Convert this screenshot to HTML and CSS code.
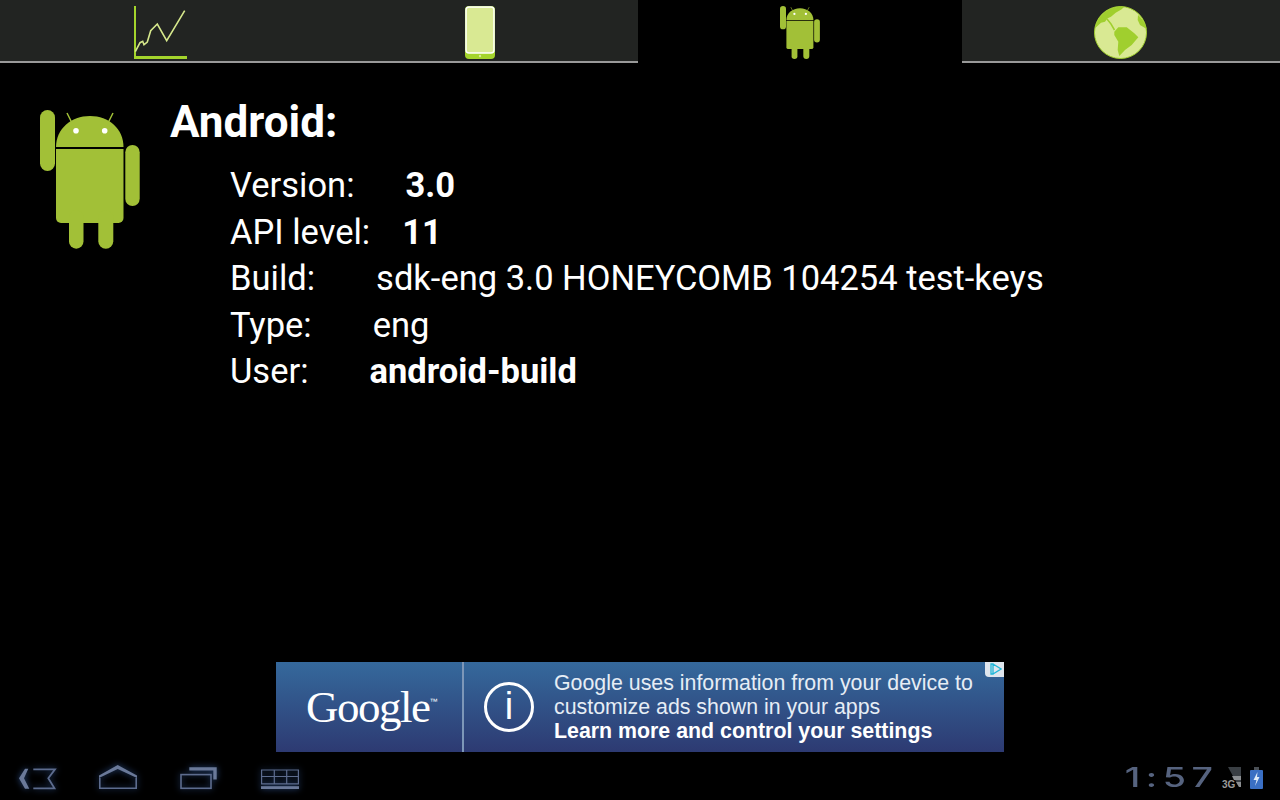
FILE: index.html
```html
<!DOCTYPE html>
<html lang="en">
<head>
    <meta charset="UTF-8">
    <meta name="viewport" content="width=device-width, initial-scale=1.0">
    <title>System Info</title>
    <link rel="stylesheet" href="styles.css">
</head>
<body>
    <svg class="defs" width="0" height="0">
        <symbol id="droid" viewBox="0 0 100 139" preserveAspectRatio="none">
            <rect x="0" y="0" width="15" height="61" rx="7.5"/>
            <path d="M16 37C16 19 31 6 50 6S83.500 19 83.500 37Z"/>
            <path d="M16 39H83.500V108a5 5 0 0 1-5 5H21a5 5 0 0 1-5-5Z"/>
            <rect x="85.300" y="35" width="14.400" height="61" rx="7.200"/>
            <rect x="29" y="100" width="14.500" height="38.700" rx="7.200"/>
            <rect x="58.300" y="100" width="15" height="38.700" rx="7.500"/>
            <path d="M27 3L31.500 12M73 3L68.500 12" stroke="#a2c037" stroke-width="1.500" fill="none"/>
            <circle cx="36" cy="20.700" r="2.800" fill="#fff"/>
            <circle cx="64.700" cy="20.700" r="2.800" fill="#fff"/>
        </symbol>
    </svg>

    <div class="tabs">
        <div class="tab tab-nudge">
            <svg width="53" height="53" viewBox="0 0 53 53">
                <path d="M0 0H2V50H53V53H0Z" fill="#a4d42c"/>
                <polyline points="1.300,45.700 6,36.700 8.700,35.300 10,38.700 13.300,36 16.700,24.700 23.300,18 32.700,34.700 50.700,4.700" fill="none" stroke="#d6e88c" stroke-width="1.600"/>
            </svg>
        </div>
        <div class="tab tab-nudge">
            <svg width="30" height="53" viewBox="0 0 30 53">
                <rect width="30" height="53" rx="4" fill="#a4d42c"/>
                <rect x="1" y="1" width="28" height="46" rx="3" fill="#d9e993" stroke="#fff" stroke-width="1.500"/>
                <circle cx="15" cy="50" r="1.200" fill="#d9e993"/>
            </svg>
        </div>
        <div class="tab tab-active">
            <svg class="droid-small" width="40" height="53"><use href="#droid"/></svg>
        </div>
        <div class="tab tab-globe">
            <svg width="53" height="53" viewBox="0 0 53 53">
                <circle cx="26.500" cy="26.500" r="26" fill="#d9e993" stroke="#a0cf2e" stroke-width="1"/>
                <path d="M20.300 25.700L24.300 21.300H32.700L40.300 27.300L44.300 31.300L37.700 39L31 44L25.300 50L23.700 44L24.300 35.700L20.300 29Z" fill="#a0cf2e"/>
                <path d="M1 22.300A26 26 0 0 1 30 1L27.700 3.300L21.700 6.700L17 10.700L13.700 12.300L11 15.700L7 16.700Z" fill="#a0cf2e"/>
                <path d="M13 13L17 18L20.500 24" fill="none" stroke="#a0cf2e" stroke-width="1.500"/>
                <path d="M44 9A26 26 0 0 1 52.700 23L46 19L43.700 14Z" fill="#a0cf2e"/>
            </svg>
        </div>
    </div>

    <div class="content">
        <svg class="droid-large" width="100" height="139"><use href="#droid"/></svg>
        <div class="info">
            <h1>Android:</h1>
            <div class="row"><span>Version:</span><b class="val-version">3.0</b></div>
            <div class="row"><span>API level:</span><b class="val-api">11</b></div>
            <div class="row"><span>Build:</span><span class="val">sdk-eng 3.0 HONEYCOMB 104254 test-keys</span></div>
            <div class="row"><span>Type:</span><span class="val">eng</span></div>
            <div class="row"><span>User:</span><b class="val">android-build</b></div>
        </div>
    </div>

    <div class="ad">
        <div class="ad-logo">Google<sup>™</sup></div>
        <div class="ad-main">
            <div class="ad-info">i</div>
            <div class="ad-text">
                Google uses information from your device to<br>
                customize ads shown in your apps<br>
                <strong>Learn more and control your settings</strong>
            </div>
        </div>
        <div class="ad-choice">
            <svg width="12" height="12" viewBox="0 0 12 12"><path d="M1 1H3V11H1ZM3 1L11 6L3 11" fill="none" stroke="#1fb6d8" stroke-width="1.300"/></svg>
        </div>
    </div>

    <div class="navbar">
        <div class="nav-buttons">
            <svg width="40" height="26" viewBox="0 0 40 26">
                <path d="M1 13.200L7 3.800H10.300L6 13.200L11.300 23.800H7Z" fill="#6a7999"/>
                <path d="M15.300 4.300H37L30.300 13.200L36.500 23.300H15.300" fill="none" stroke="#5d6c8e" stroke-width="1.800"/>
            </svg>
            <svg width="40" height="26" viewBox="0 0 40 26">
                <path d="M0 10.500L18.700 0L38 10.500V13L18.700 4L0 13Z" fill="#6a7999"/>
                <path d="M.8 13V23.300H37.200V13" fill="none" stroke="#5d6c8e" stroke-width="1.600"/>
            </svg>
            <svg width="40" height="26" viewBox="0 0 40 26">
                <path d="M9.300 2.200H36.700V14.500H33.300V5.500H9.300Z" fill="#6a7999"/>
                <rect x="1" y="9.600" width="30" height="13.700" fill="none" stroke="#5d6c8e" stroke-width="1.600"/>
            </svg>
            <svg width="40" height="26" viewBox="0 0 40 26">
                <path d="M.6 5H37.400V18.800H.6ZM.6 11.500H37.400M13.300 5V18.800M25.700 5V18.800" fill="none" stroke="#5d6c8e" stroke-width="1.200"/>
                <rect x="0" y="21.200" width="38" height="2.800" fill="#6a7999"/>
            </svg>
        </div>
        <div class="status">
            <span class="clock">1:57</span>
            <div class="signal">
                <svg width="20" height="20" viewBox="0 0 20 20">
                    <path d="M6 0H19V20H17Z" fill="#3a3f44"/>
                    <path d="M10 9H19V13H12ZM14 15H19V20H17Z" fill="#8c8f92"/>
                </svg>
                <span class="net">3G</span>
            </div>
            <svg width="13" height="22" viewBox="0 0 13 22">
                <rect x="4" y="0" width="5" height="3" fill="#4a4f55"/>
                <rect x="0" y="3" width="13" height="19" rx="1" fill="#3a6fc4"/>
                <path d="M7.500 5L3.500 13H6.500L5 19L9.500 10H7Z" fill="#dfeaf8"/>
            </svg>
        </div>
    </div>
</body>
</html>
```

FILE: styles.css
```css
* {
    box-sizing: border-box;
}
body {
    margin: 0;
    width: 1280px;
    height: 800px;
    display: flex;
    flex-direction: column;
    background-color: #000;
    color: #fff;
    font-family: Roboto, sans-serif;
    overflow: hidden;
}
.defs {
    display: block;
    height: 0;
}
.tabs {
    display: grid;
    grid-template-columns: 319px 319px 324px 318px;
    height: 64px;
    flex-shrink: 0;
}
.tab {
    display: flex;
    justify-content: center;
    padding-top: 6px;
    background-color: #222422;
    border-bottom: 2px solid #999;
    height: 63px;
}
.tab-nudge {
    padding-left: 2px;
}
.tab-globe {
    padding-right: 2px;
}
.tab-active {
    background-color: #000;
    border-bottom: none;
}
.droid-small,
.droid-large {
    fill: #a2c037;
}
.content {
    flex: 1;
    display: flex;
    padding: 46px 0 0 40px;
}
.droid-large {
    flex-shrink: 0;
}
.info {
    margin-left: 30px;
    margin-top: -18px;
}
h1 {
    margin: 0 0 10px;
    font-size: 44px;
    line-height: 60px;
    font-weight: 700;
}
.row {
    margin-left: 60px;
    font-size: 34.500px;
    line-height: 46.500px;
    white-space: nowrap;
}
.val {
    margin-left: 61px;
}
.val-version {
    margin-left: 51px;
}
.val-api {
    margin-left: 32px;
}
.ad {
    position: relative;
    flex-shrink: 0;
    display: flex;
    width: 728px;
    height: 90px;
    margin: 0 auto;
    background: linear-gradient(#35699c, #2d3a72);
}
.ad-logo {
    width: 188px;
    flex-shrink: 0;
    padding: 18px 0 0 30px;
    font-family: "Liberation Serif", serif;
    font-size: 45px;
    letter-spacing: -1.500px;
    line-height: 54px;
    border-right: 2px solid #7d97b8;
}
.ad-logo sup {
    font-family: "Liberation Sans", sans-serif;
    font-size: 8px;
    line-height: 0;
    vertical-align: 18px;
    letter-spacing: 0;
}
.ad-main {
    flex: 1;
    display: flex;
    padding-left: 20px;
}
.ad-info {
    width: 50px;
    height: 50px;
    margin-top: 20px;
    border: 3px solid #fff;
    border-radius: 50%;
    text-align: center;
    font-family: "Liberation Sans", sans-serif;
    font-size: 38px;
    line-height: 42px;
}
.ad-text {
    margin-left: 20px;
    padding-top: 9px;
    font-family: "Liberation Sans", sans-serif;
    font-size: 21.350px;
    line-height: 24px;
    color: #e6edf5;
    white-space: nowrap;
}
.ad-text strong {
    color: #fff;
}
.ad-choice {
    position: absolute;
    top: 0;
    right: 0;
    width: 19px;
    height: 15px;
    padding: 1px 0 0 5px;
    background-color: #dfe6ee;
    border-bottom-left-radius: 4px;
    line-height: 0;
}
.navbar {
    flex-shrink: 0;
    height: 48px;
    display: flex;
    justify-content: space-between;
    align-items: center;
    padding: 3px 17px 0 18px;
}
.nav-buttons {
    display: flex;
    gap: 41px;
}
.nav-buttons svg {
    filter: drop-shadow(0 0 3px #2a4a80);
}
.status {
    display: flex;
    align-items: center;
    gap: 9px;
}
.clock {
    margin-right: -6px;
    font-family: Inter, sans-serif;
    font-size: 27px;
    font-weight: 500;
    color: #56637f;
    letter-spacing: 4px;
    line-height: 30px;
    transform: scaleX(1.390);
    transform-origin: right center;
}
.signal {
    position: relative;
    width: 19px;
    height: 22px;
}
.net {
    position: absolute;
    left: 0;
    bottom: -1px;
    font-family: "Liberation Sans", sans-serif;
    font-size: 10px;
    font-weight: 700;
    color: #9a9a9a;
}
```
